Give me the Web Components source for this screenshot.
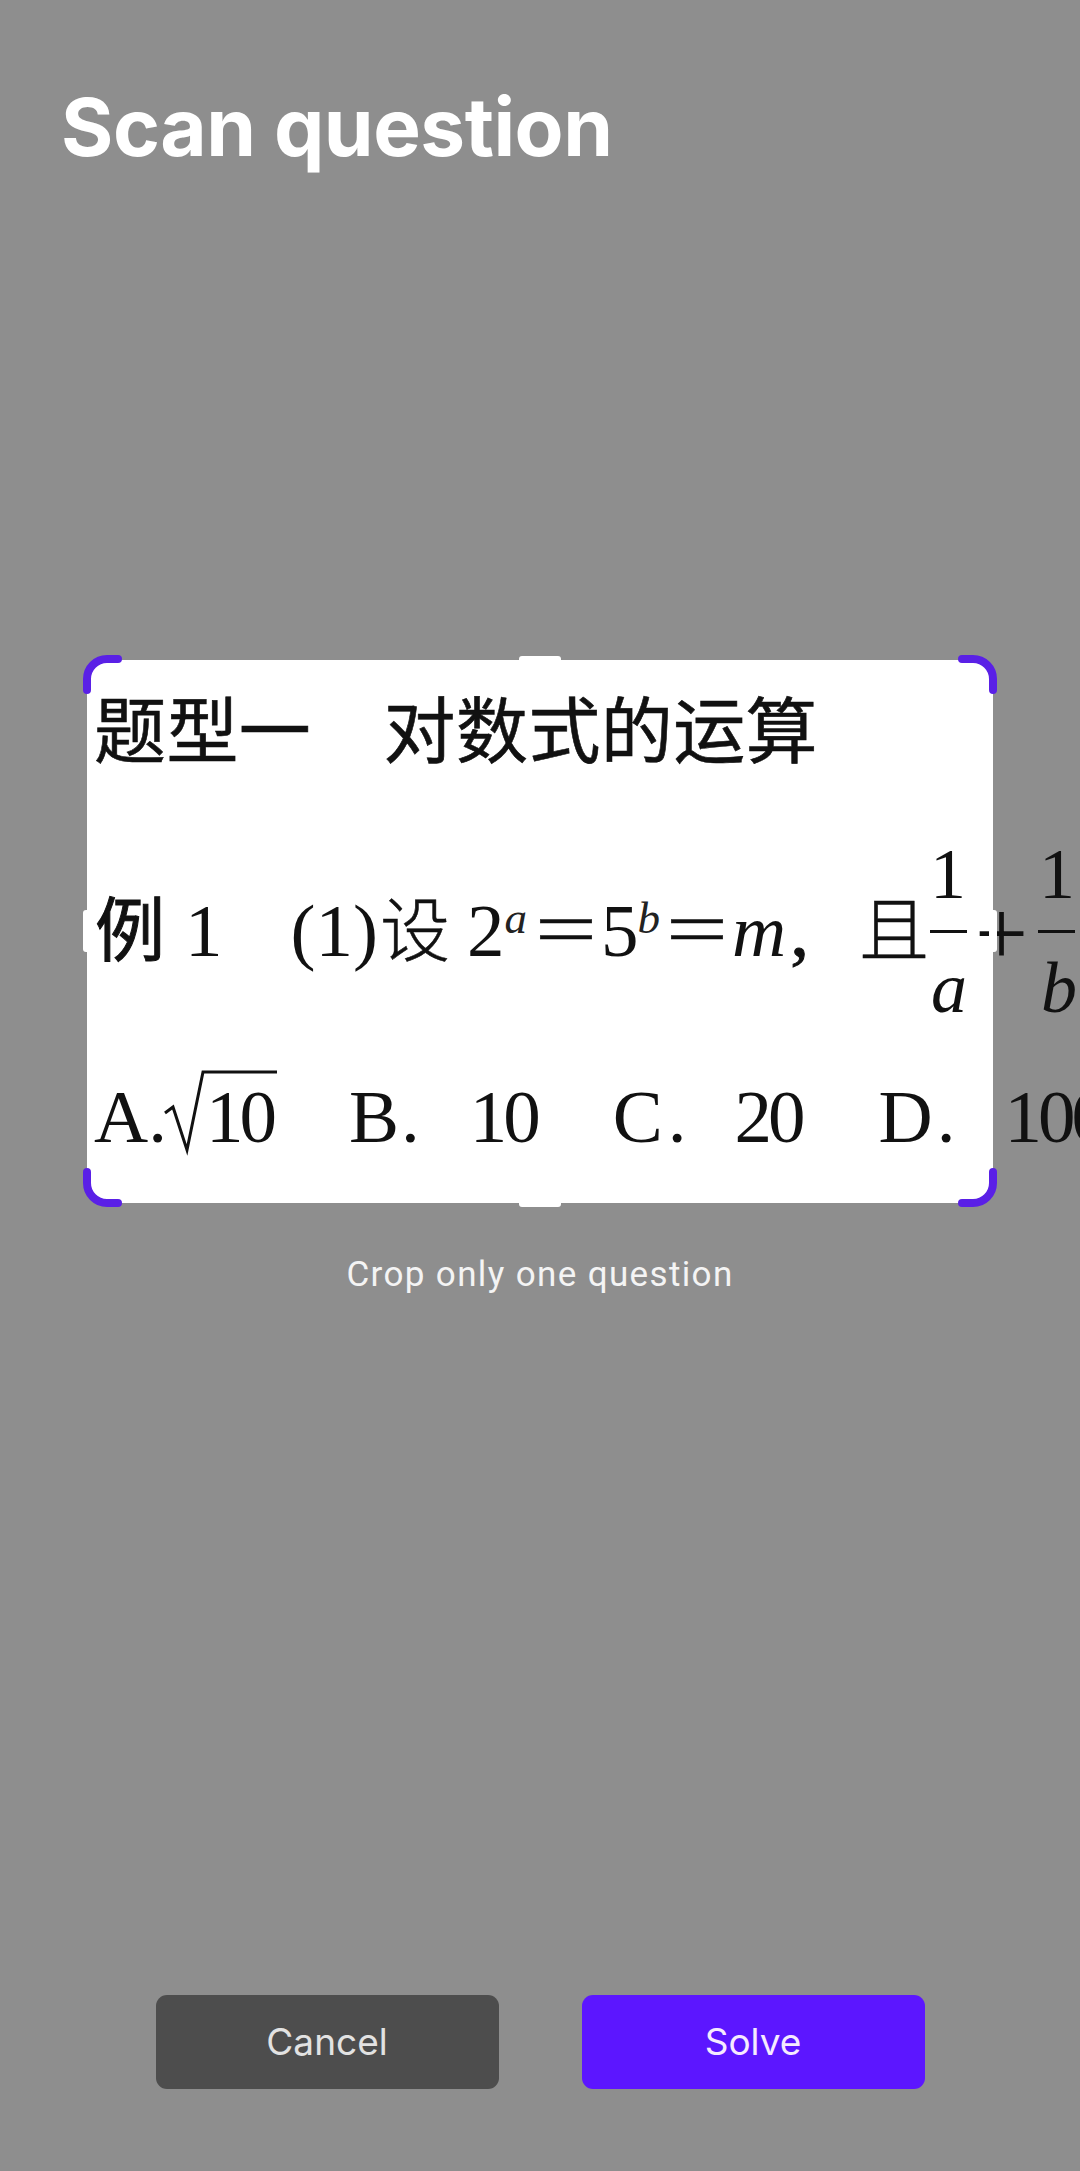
<!DOCTYPE html>
<html lang="en">
<head>
<meta charset="UTF-8">
<title>Scan question</title>
<style>
  html, body { margin: 0; background: #8e8e8e; }
  body { font-family: Inter, "Noto Sans", sans-serif; }
</style>
</head>
<body>
<scan-screen>
  <span slot="title">Scan question</span>
  <crop-box><question-sheet></question-sheet></crop-box>
  <span slot="hint">Crop only one question</span>
  <scan-button slot="actions" kind="cancel">Cancel</scan-button>
  <scan-button slot="actions" kind="solve">Solve</scan-button>
</scan-screen>

<template id="scan-screen-template">
  <style>
    :host { display: flex; flex-direction: column; width: 1080px; height: 2171px; background: #8e8e8e; overflow: hidden; }
    h1 { margin: 0; padding: 82px 0 0 61px; height: 88px; font: 700 80px/90px Inter, sans-serif; color: #fff; letter-spacing: -0.5px; }
    .crop { padding: 485px 0 0 83px; }
    .hint { margin-top: 46px; text-align: center; font: 400 35px/44px Roboto, sans-serif; letter-spacing: 1.36px; color: #f4f4f4; }
    .actions { margin-top: auto; display: flex; justify-content: center; gap: 83px; padding: 0 0 82px 0; }
  </style>
  <h1><slot name="title"></slot></h1>
  <div class="crop"><slot></slot></div>
  <div class="hint"><slot name="hint"></slot></div>
  <div class="actions"><slot name="actions"></slot></div>
</template>

<template id="scan-button-template">
  <style>
    :host { display: flex; align-items: center; justify-content: center; width: 343px; height: 94px; border-radius: 11px; font: 400 37px/44px Inter, sans-serif; }
    :host([kind="cancel"]) { background: #4d4d4d; color: #e2e2e2; }
    :host([kind="solve"]) { background: #5c16ff; color: #f6eaff; }
  </style>
  <slot></slot>
</template>

<template id="crop-box-template">
  <style>
    :host { display: block; position: relative; width: 914px; height: 552px; }
    .paper { position: absolute; left: 3.5px; top: 4.5px; width: 906px; height: 543px; background: #fff; border-radius: 20px; }
    .corner { position: absolute; width: 39px; height: 39px; fill: none; stroke: #5a20e6; stroke-width: 8; stroke-linecap: round; }
    .tl { left: 0; top: 0; }
    .tr { right: 0; top: 0; transform: scaleX(-1); }
    .bl { left: 0; bottom: 0; transform: scaleY(-1); }
    .br { right: 0; bottom: 0; transform: scale(-1, -1); }
    .handle { position: absolute; background: #fff; border-radius: 3px; }
    .ht { left: 436px; top: 1px; width: 42px; height: 8px; }
    .hb { left: 436px; bottom: 0; width: 42px; height: 8px; }
    .hl { left: 0; top: 255px; width: 8px; height: 42px; }
    .hr { right: 0; top: 255px; width: 8px; height: 42px; }
  </style>
  <div class="paper"></div>
  <slot></slot>
  <div class="handle ht"></div><div class="handle hb"></div><div class="handle hl"></div><div class="handle hr"></div>
  <svg class="corner tl" viewBox="0 0 39 39"><path d="M4 35V24A20 20 0 0 1 24 4H35"/></svg>
  <svg class="corner tr" viewBox="0 0 39 39"><path d="M4 35V24A20 20 0 0 1 24 4H35"/></svg>
  <svg class="corner bl" viewBox="0 0 39 39"><path d="M4 35V24A20 20 0 0 1 24 4H35"/></svg>
  <svg class="corner br" viewBox="0 0 39 39"><path d="M4 35V24A20 20 0 0 1 24 4H35"/></svg>
</template>

<template id="question-sheet-template">
  <style>
    :host { display: block; position: absolute; inset: 0; font-family: "Liberation Serif", "Noto Sans CJK SC", serif; color: #111; }
    .row { display: flex; align-items: baseline; white-space: nowrap; height: 0; position: absolute; left: 0; width: 1100px; }
    .row > * { flex: none; }
    .h { font: 400 72px/0 "Noto Sans CJK SC", sans-serif; margin-left: 11px; letter-spacing: 0.4px; -webkit-text-stroke: 0.6px #111; }
    .t { font-size: 75px; line-height: 0; }
    .n { letter-spacing: -4px; }
    .f { font-size: 72px; line-height: 0; }
    .c { font: 400 70px/0 "Noto Sans CJK SC", sans-serif; }
    .l { font-weight: 300; -webkit-text-stroke: 0.5px #111; }
    .b { -webkit-text-stroke: 1px #111; }
    .i { font-style: italic; }
    .sup { font-size: 45px; font-style: italic; line-height: 0; position: relative; top: -23px; color: #222; }
    .bar { position: absolute; top: 275px; height: 3px; width: 37px; background: #111; }
    svg { position: absolute; left: 77px; top: 405px; fill: none; stroke: #111; stroke-width: 3; }
  </style>
  <div class="row" style="top:71px"><span class="h">题型一　对数式的运算</span></div>

  <div class="row" style="top:219px"><span class="f" style="margin-left:847px">1</span><span class="f" style="margin-left:73px">1</span></div>
  <div class="bar" style="left:847px"></div>
  <div class="bar" style="left:955px"></div>
  <div class="row" style="top:271px">
    <span class="c b" style="margin-left:12px">例</span><span class="t" style="margin-left:20px">1</span>
    <span class="t" style="margin-left:68px">(1)</span><span class="c l" style="margin-left:2px">设</span><span class="t" style="margin-left:17px">2</span><span class="sup">a</span>
    <span class="c l" style="margin-left:4px">＝</span><span class="t">5</span><span class="sup" style="margin-left:-1px">b</span>
    <span class="c l" style="margin-left:2px">＝</span><span class="t i">m</span><span class="t b" style="margin-left:4px">,</span>
    <span class="c l" style="margin-left:50px">且</span>
  </div>
  <div class="row" style="top:278px"><span style="font-size:94px;line-height:0;margin-left:892px">+</span></div>
  <div class="row" style="top:333px"><span class="f i" style="margin-left:848px">a</span><span class="f i" style="margin-left:74px">b</span></div>

  <svg width="130" height="100" viewBox="0 0 130 100"><path d="M5 53L13 47L27 90L43 12H117"/></svg>
  <div class="row" style="top:462px">
    <span class="t" style="margin-left:11px">A.</span><span class="t n" style="margin-left:39px">10</span>
    <span class="t" style="margin-left:76px">B</span><span class="t" style="margin-left:2px">.</span><span class="t n" style="margin-left:50px">10</span>
    <span class="t" style="margin-left:76px">C</span><span class="t" style="margin-left:5px">.</span><span class="t n" style="margin-left:48px">20</span>
    <span class="t" style="margin-left:77px">D</span><span class="t" style="margin-left:4px">.</span><span class="t n" style="margin-left:49px">100</span>
  </div>
</template>

<script>
  "use strict";
  class TemplatedElement extends HTMLElement {
    connectedCallback() {
      if (this.shadowRoot) return;
      const tpl = document.getElementById(this.constructor.templateId);
      this.attachShadow({ mode: "open" }).appendChild(tpl.content.cloneNode(true));
    }
  }
  class ScanScreen extends TemplatedElement { static get templateId() { return "scan-screen-template"; } }
  class CropBox extends TemplatedElement { static get templateId() { return "crop-box-template"; } }
  class QuestionSheet extends TemplatedElement { static get templateId() { return "question-sheet-template"; } }
  class ScanButton extends TemplatedElement { static get templateId() { return "scan-button-template"; } }
  customElements.define("scan-screen", ScanScreen);
  customElements.define("crop-box", CropBox);
  customElements.define("question-sheet", QuestionSheet);
  customElements.define("scan-button", ScanButton);
</script>
</body>
</html>
